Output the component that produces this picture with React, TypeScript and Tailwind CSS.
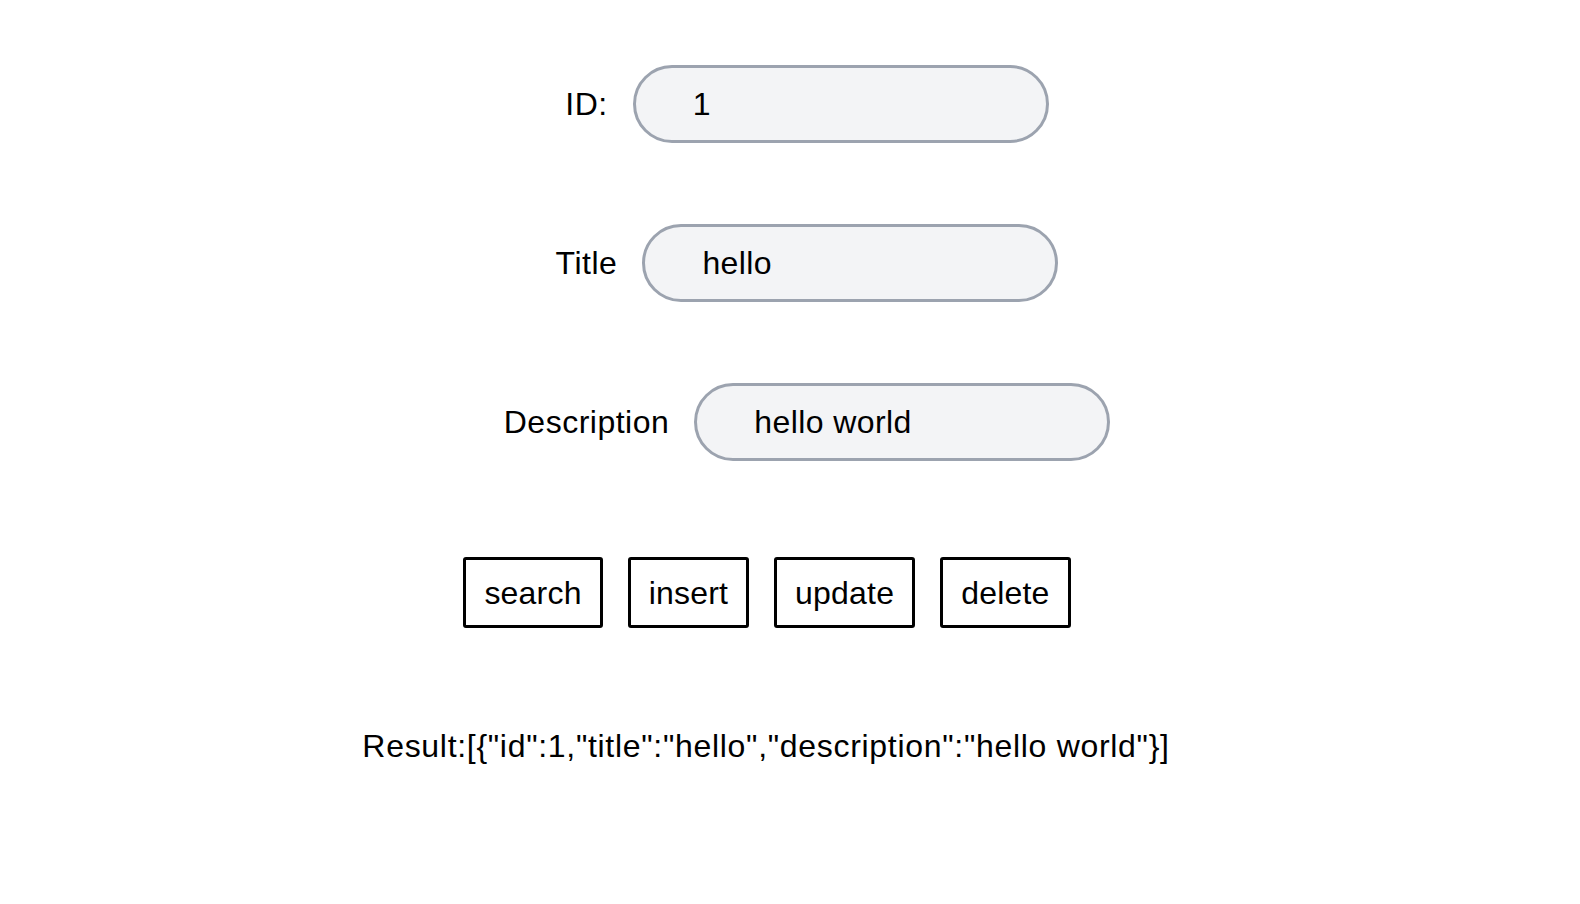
import { useState } from "react";

export default function App() {
  const [id, setId] = useState("1");
  const [title, setTitle] = useState("hello");
  const [description, setDescription] = useState("hello world");
  const result = [{ id: 1, title: "hello", description: "hello world" }];

  return (
    <div className="min-h-screen bg-white text-black font-['Liberation_Sans',Arial,sans-serif] text-[32px] flex flex-col items-center pt-[65px]">
      <div className="flex flex-col items-center gap-[81px] pl-[34px]">
        <Field label="ID:" value={id} onChange={setId} />
        <Field label="Title" value={title} onChange={setTitle} />
        <Field label="Description" value={description} onChange={setDescription} />
      </div>

      <div className="flex items-center gap-[25px] mt-[96px] pr-[46px]">
        {["search", "insert", "update", "delete"].map((b) => (
          <button
            key={b}
            type="button"
            className="h-[71px] px-[18px] border-[3px] border-black rounded-[3px] bg-white leading-none tracking-[0.2px]"
          >
            {b}
          </button>
        ))}
      </div>

      <p className="mt-[100px] pr-[48px] leading-[37px] tracking-[0.7px]">Result:{JSON.stringify(result)}</p>
    </div>
  );
}

function Field({ label, value, onChange }: { label: string; value: string; onChange: (v: string) => void }) {
  return (
    <div className="flex items-center gap-[25px]">
      <label className="tracking-[0.5px]">{label}</label>
      <input
        value={value}
        onChange={(e) => onChange(e.target.value)}
        className="w-[416px] h-[78px] rounded-full border-[3px] border-[#9ca3af] bg-[#f3f4f6] pl-[57px] pr-6 outline-none tracking-[0.4px]"
      />
    </div>
  );
}
